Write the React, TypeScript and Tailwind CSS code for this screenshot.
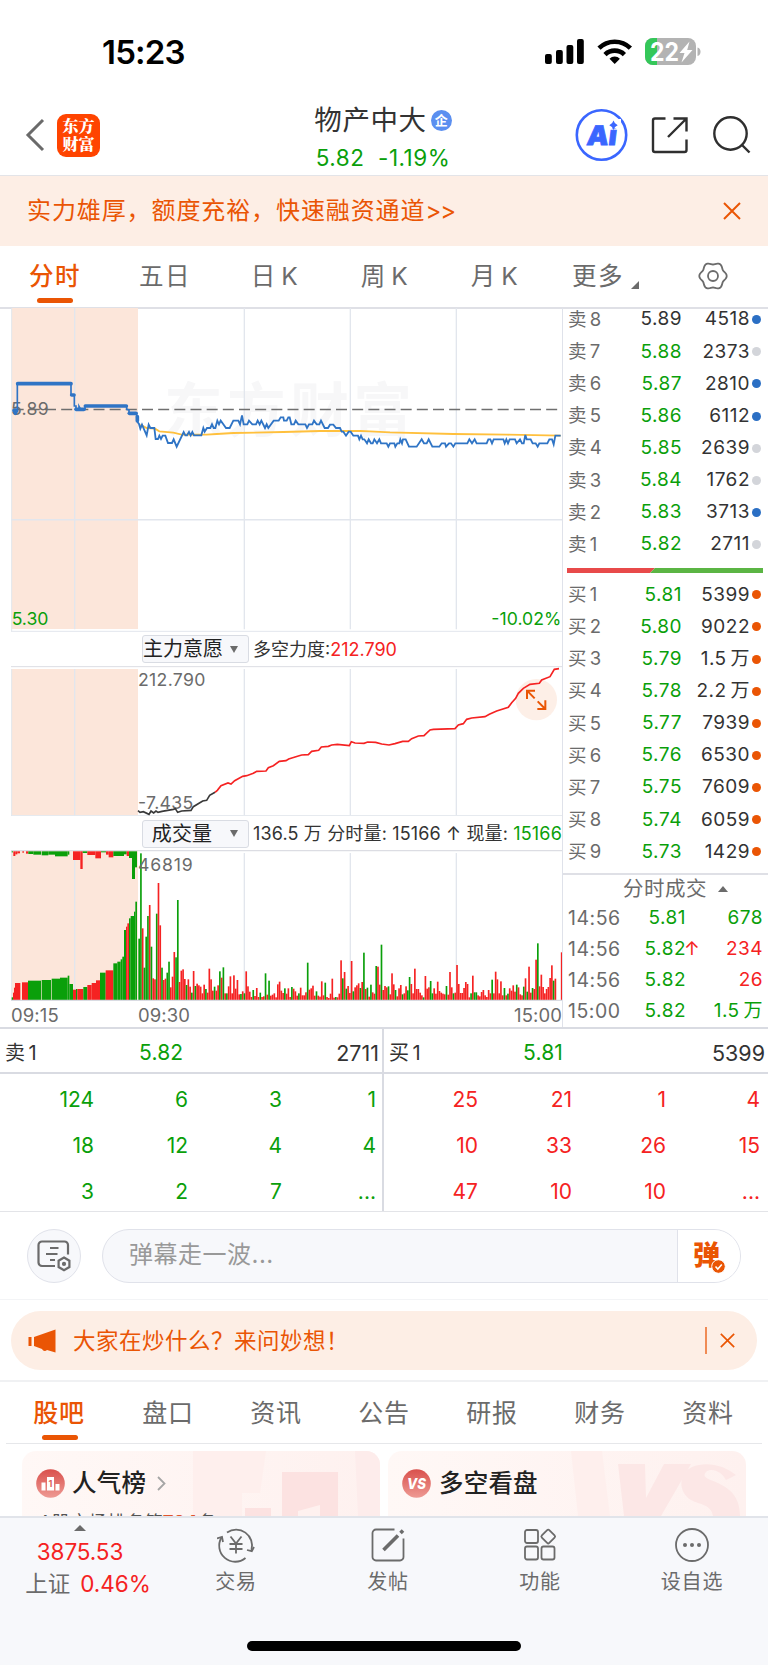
import type { ReactNode } from "react";

const GREEN = "#0a9f0a";
const RED = "#f52222";
const BLUE = "#2f74c5";
const GRID = "#e2e6ed";

type Level = { label: string; price: string; volume: string; dot: string; priceClass?: string };

const SELLS: Level[] = [
  { label: "卖 8", price: "5.89", volume: "4518", dot: "bg-[#2b6fc4]", priceClass: "text-[#333]" },
  { label: "卖 7", price: "5.88", volume: "2373", dot: "bg-[#d3d5da]" },
  { label: "卖 6", price: "5.87", volume: "2810", dot: "bg-[#2b6fc4]" },
  { label: "卖 5", price: "5.86", volume: "6112", dot: "bg-[#2b6fc4]" },
  { label: "卖 4", price: "5.85", volume: "2639", dot: "bg-[#d3d5da]" },
  { label: "卖 3", price: "5.84", volume: "1762", dot: "bg-[#d3d5da]" },
  { label: "卖 2", price: "5.83", volume: "3713", dot: "bg-[#2b6fc4]" },
  { label: "卖 1", price: "5.82", volume: "2711", dot: "bg-[#d3d5da]" },
];

const BUYS: Level[] = [
  { label: "买 1", price: "5.81", volume: "5399", dot: "bg-[#ea5504]" },
  { label: "买 2", price: "5.80", volume: "9022", dot: "bg-[#ea5504]" },
  { label: "买 3", price: "5.79", volume: "1.5 万", dot: "bg-[#ea5504]" },
  { label: "买 4", price: "5.78", volume: "2.2 万", dot: "bg-[#ea5504]" },
  { label: "买 5", price: "5.77", volume: "7939", dot: "bg-[#ea5504]" },
  { label: "买 6", price: "5.76", volume: "6530", dot: "bg-[#ea5504]" },
  { label: "买 7", price: "5.75", volume: "7609", dot: "bg-[#ea5504]" },
  { label: "买 8", price: "5.74", volume: "6059", dot: "bg-[#ea5504]" },
  { label: "买 9", price: "5.73", volume: "1429", dot: "bg-[#ea5504]" },
];

const TRADES = [
  { time: "14:56", price: "5.81", arrow: "", volume: "678", color: "text-[#0a9f0a]" },
  { time: "14:56", price: "5.82", arrow: "↑", volume: "234", color: "text-[#f52222]" },
  { time: "14:56", price: "5.82", arrow: "", volume: "26", color: "text-[#f52222]" },
  { time: "15:00", price: "5.82", arrow: "", volume: "1.5 万", color: "text-[#0a9f0a]" },
];

const SELL_ORDERS = ["124", "6", "3", "1", "18", "12", "4", "4", "3", "2", "7", "..."];
const BUY_ORDERS = ["25", "21", "1", "4", "10", "33", "26", "15", "47", "10", "10", "..."];

// Chart data is kept in thirds of a pixel
const AUCTION_LINE =
  "40,330 45,335 50,335 52,335 52,251 213,251 213,285 223,285 223,318 228,318 228,328 237,328 237,319 242,328 255,328 255,318 380,318 380,328 387,330 387,340 410,340 410,350 412,365";

const PRICE_LINE =
  "412,365 417,372 421,386 426,374 440,406 446,374 451,384 463,384 467,417 474,417 478,407 483,417 488,407 496,407 504,429 516,429 521,418 530,440 551,396 556,406 561,406 567,396 572,406 577,396 582,406 604,406 610,384 614,395 621,384 631,384 636,373 641,384 646,384 652,362 657,373 662,362 670,373 678,384 689,384 700,362 715,362 720,373 726,346 731,373 742,373 747,362 757,373 768,373 773,362 779,373 784,362 795,384 800,373 805,384 821,362 836,362 842,352 850,352 852,362 860,362 865,352 869,352 874,373 882,373 887,362 895,373 916,373 921,384 927,373 937,373 942,362 950,373 958,373 963,362 974,384 984,384 990,374 1000,374 1008,384 1020,384 1025,395 1030,395 1038,407 1046,395 1052,395 1060,407 1074,407 1078,418 1083,407 1088,418 1093,418 1101,430 1106,418 1113,430 1118,430 1123,418 1131,430 1138,418 1143,430 1160,430 1165,440 1170,430 1183,430 1186,440 1192,430 1198,430 1201,418 1206,430 1209,418 1217,418 1227,440 1250,440 1265,418 1272,430 1280,430 1286,418 1297,440 1318,440 1325,430 1335,430 1338,440 1347,430 1353,430 1360,440 1366,430 1402,430 1408,418 1416,430 1424,418 1430,430 1460,430 1465,418 1471,418 1476,430 1481,418 1510,418 1514,430 1519,418 1524,430 1529,418 1545,418 1550,430 1560,418 1566,430 1571,430 1576,405 1580,418 1592,418 1598,430 1607,430 1613,440 1618,430 1642,430 1648,418 1656,418 1661,433 1666,407 1682,407";

const AVERAGE_LINE =
  "421,374 440,384 465,386 478,394 520,398 545,404 620,404 650,402 700,399 850,396 960,393 1080,393 1110,394 1170,397 1360,402 1520,404 1682,407";

const FORCE_START =
  "414,572 420,577 430,575 447,583 453,573 461,579 468,573 474,577 486,574 520,568 526,566 533,577 545,573 573,571 580,560 608,543 620,541 629,526 645,517";

const FORCE_LINE =
  "645,517 652,511 663,497 684,489 693,492 704,482 728,469 740,467 760,460 770,454 798,453 805,443 820,437 838,424 858,422 866,417 895,408 905,405 925,404 935,394 956,391 964,381 985,379 995,375 1012,373 1048,377 1054,365 1065,369 1092,370 1103,366 1127,367 1145,372 1167,375 1185,371 1208,364 1225,364 1235,356 1255,348 1272,347 1290,330 1300,328 1365,326 1375,315 1390,311 1400,298 1415,294 1455,290 1468,283 1490,273 1525,262 1535,248 1547,235 1555,220 1570,205 1590,193 1618,190 1625,180 1650,170 1663,148 1677,146";

const VOLUMES_A =
  "g184 g440 r215 g97 g190 g252 r285 g160 r65 r62 g259 r351 r224 g97 r60 r64 g82 g115 r38 r70 r144 g128 g300 r54 r88 r92 r63 g45 r62 r40 g22 r87 g42 r49 r44 r40 r20 r46 g33 r22";

const VOLUMES_B =
  "r94 r62 r28 g40 r28 r44 g86 r67 g98 r20 g20 r41 r71 r20 r74 r34 r60 r17 g18 r26 g20 r86 r41 r25 r9 g30 r12 r36 r9 g22 r9 r11 g80 r16 g58 r13 r16 r20 r8 r47 r55 r28 r21 g35 r19 r35 r9 g39 r34 r26 r13 g20 r37 r14 r14 r23 g112 r31 r35 r43 r13 g26 r13 r10 r56 r14 g52 r9 r6 r19 r64 r7 g9 r8 r19 r119 g65 r84 g34 r42 r21 r117 g26 r38 r44 r50 g36 r54 g142 r33 g37 r10 g46 r23 r19 g102 r100 r46 g166 r30 r42 r38 g41 r17 r80 r47 g30 r11 r35 r45 g17 r20 r41 g29 g69 r48 r20 r94 r33 r33 r22 r14 g8 r72 r34 r38 g57 g20 r35 r19 r55 r27 r22 r19 r17 g42 r16 r84 r38 g20 r22 r105 r48 r21 r21 r36 r54 r48 r8 g20 r73 g23 g23 r14 r11 r24 r30 r14 r9 r30 r20 g61 r20 r85 r62 r20 r56 r14 g36 r14 g19 r35 r28 r44 r25 g46 r38 r17 r14 g40 r65 g25 r100 r22 g36 r33 r121 g170 r41 r76 r39 r20 r33 r39 r66 r104 g58 r64";

// [from, to, height, color]
const AUCTION_BARS: [number, number, number, string][] = [
  [35, 39, 8, "g"], [39, 42, 22, "r"], [42, 45, 37, "r"], [45, 61, 51, "r"], [66, 84, 53, "r"],
  [84, 123, 58, "g"], [125, 153, 60, "g"], [155, 180, 64, "g"], [180, 203, 67, "g"], [203, 208, 73, "g"],
  [208, 219, 48, "g"], [219, 228, 31, "r"], [228, 232, 33, "g"], [232, 250, 33, "r"], [250, 262, 39, "g"],
  [262, 275, 45, "r"], [275, 288, 51, "r"], [288, 300, 59, "r"], [300, 317, 82, "g"], [317, 340, 89, "r"],
  [340, 352, 110, "g"], [352, 362, 115, "g"], [362, 367, 122, "g"], [367, 372, 130, "g"], [372, 378, 210, "g"],
  [378, 382, 220, "r"], [382, 387, 230, "r"], [387, 392, 245, "g"], [392, 402, 252, "g"], [402, 406, 265, "g"], [406, 411, 295, "g"],
];

const AUCTION_TOP: [number, number, number, string][] = [
  [35, 39, 3, "g"], [40, 46, 14, "r"], [46, 52, 9, "r"], [52, 60, 6, "r"], [67, 72, 4, "r"], [78, 85, 7, "r"],
  [85, 100, 8, "g"], [100, 123, 10, "g"], [125, 145, 12, "g"], [145, 165, 10, "g"], [165, 203, 15, "g"], [203, 208, 10, "g"],
  [219, 241, 26, "r"], [241, 248, 53, "r"], [248, 262, 5, "g"], [262, 286, 11, "r"], [286, 303, 21, "r"], [303, 318, 3, "g"],
  [318, 326, 10, "r"], [326, 340, 18, "r"], [340, 372, 14, "g"], [372, 380, 9, "g"], [380, 387, 14, "r"], [387, 396, 20, "g"],
  [396, 405, 83, "g"], [405, 411, 48, "g"],
];

const COLORS: Record<string, string> = { g: GREEN, r: RED };

function VolumeBars({ data, start }: { data: string; start: number }) {
  return (
    <>
      {data.split(" ").map((bar, i) => {
        const h = Number(bar.slice(1));
        return <rect key={i} x={start + i * 5.27 - 2.5} y={1140 - h} width={5} height={h} fill={COLORS[bar[0]]} />;
      })}
    </>
  );
}

function GridLines({ y1, y2 }: { y1: number; y2: number }) {
  return (
    <g stroke={GRID} strokeWidth={4}>
      <line x1={224} x2={224} y1={y1} y2={y2} />
      <line x1={733} x2={733} y1={y1} y2={y2} />
      <line x1={1051} x2={1051} y1={y1} y2={y2} />
      <line x1={1369} x2={1369} y1={y1} y2={y2} />
    </g>
  );
}

function PriceChart() {
  return (
    <svg viewBox="0 24 1686 972" className="block h-[324px] w-[562px]">
      <rect x={35} y={24} width={379} height={963} fill="#fce6da" />
      <text x={492} y={397} fontSize={176} fontWeight={700} fill="#f7f7f8" textLength={744}>东方财富</text>
      <GridLines y1={24} y2={988} />
      <line x1={35} x2={35} y1={24} y2={994} stroke={GRID} strokeWidth={3} />
      <line x1={35} x2={1686} y1={659} y2={659} stroke={GRID} strokeWidth={4.5} />
      <line x1={33} x2={1686} y1={994} y2={994} stroke={GRID} strokeWidth={3} />
      <text x={33} y={346} fontSize={53} fill="#6b6b6b" textLength={113}>5.89</text>
      <line x1={38} x2={1686} y1={328.5} y2={328.5} stroke="#6f6f6f" strokeWidth={4} strokeDasharray="33 15.5" />
      <polyline points={AVERAGE_LINE} fill="none" stroke="#ffc03d" strokeWidth={5.5} />
      <polyline points={AUCTION_LINE} fill="none" stroke={BLUE} strokeWidth={5} />
      <g stroke={BLUE} strokeWidth={11} strokeLinecap="round">
        <line x1={42} x2={50} y1={332} y2={332} />
        <line x1={46} x2={46} y1={330} y2={340} />
        <line x1={53} x2={213} y1={251} y2={251} />
        <line x1={215} x2={222} y1={285} y2={285} />
        <line x1={228} x2={252} y1={328} y2={328} />
        <line x1={256} x2={379} y1={318} y2={318} />
        <line x1={388} x2={408} y1={340} y2={340} />
        <line x1={412} x2={412} y1={350} y2={362} />
      </g>
      <polyline points={PRICE_LINE} fill="none" stroke={BLUE} strokeWidth={5.5} />
      <text x={35} y={974} fontSize={53} fill={GREEN} textLength={110}>5.30</text>
      <text x={1474} y={974} fontSize={53} fill={GREEN} textLength={210}>-10.02%</text>
    </svg>
  );
}

function ForceChart() {
  return (
    <svg viewBox="0 138 1686 450" className="block h-[150px] w-[562px]">
      <line x1={33} x2={1686} y1={140} y2={140} stroke="#dcdde3" strokeWidth={3} />
      <rect x={35} y={147} width={379} height={438} fill="#fce6da" />
      <GridLines y1={147} y2={586} />
      <line x1={35} x2={35} y1={147} y2={588} stroke={GRID} strokeWidth={3} />
      <line x1={33} x2={1686} y1={587} y2={587} stroke={GRID} strokeWidth={3} />
      <circle cx={1609} cy={239} r={62} fill="#fdefe7" />
      <text x={414} y={197} fontSize={53} fill="#6b6b6b" textLength={202}>212.790</text>
      <text x={414} y={567} fontSize={53} fill="#6b6b6b" textLength={166}>-7.435</text>
      <polyline points={FORCE_START} fill="none" stroke="#3a3a3a" strokeWidth={5} />
      <polyline points={FORCE_LINE} fill="none" stroke={RED} strokeWidth={5} />
      <g fill="none" stroke="#ea5504" strokeWidth={6}>
        <path d="M1581 237V212H1605M1581 212L1604 235" />
        <path d="M1636 241V267H1612M1636 267L1613 244" />
      </g>
    </svg>
  );
}

function VolumeChart() {
  return (
    <svg viewBox="0 690 1686 453" className="block h-[151px] w-[562px]">
      <rect x={35} y={693} width={379} height={447} fill="#fce6da" />
      <line x1={33} x2={1686} y1={692} y2={692} stroke="#dcdde3" strokeWidth={4} />
      <GridLines y1={699} y2={1140} />
      <line x1={35} x2={35} y1={692} y2={1140} stroke={GRID} strokeWidth={3} />
      {AUCTION_BARS.map(([from, to, h, c]) => (
        <rect key={from} x={from} y={1140 - h} width={to - from} height={h} fill={COLORS[c]} />
      ))}
      {AUCTION_TOP.map(([from, to, h, c]) => (
        <rect key={from} x={from} y={694} width={to - from} height={h} fill={COLORS[c]} />
      ))}
      <VolumeBars data={VOLUMES_A} start={417.5} />
      <VolumeBars data={VOLUMES_B} start={628} />
      <rect x={1682.5} y={997} width={4} height={143} fill={RED} />
      <text x={414} y={752} fontSize={53} fill="#6b6b6b" textLength={164}>46819</text>
      <line x1={33} x2={1686} y1={1141} y2={1141} stroke="#d9dbe2" strokeWidth={4} />
    </svg>
  );
}

function StatusBar() {
  return (
    <div className="flex h-[95px] items-start justify-between pt-[33px] pr-[67px] pl-[102px]">
      <span className="text-[33px] leading-[38px] font-semibold tracking-[-0.800px] text-black">15:23</span>
      <svg width="157" height="38" viewBox="544 33 157 38">
        <g>
          <rect x="545" y="54" width="6.8" height="10" rx="2" />
          <rect x="556" y="50" width="6.8" height="14" rx="2" />
          <rect x="566.500" y="45" width="6.8" height="19" rx="2" />
          <rect x="577" y="39" width="6.800" height="25" rx="2" />
        </g>
        <g fill="none" stroke="#000" strokeWidth="4.600">
          <path d="M599 48.200a22.500 22.500 0 0 1 31.400 0" />
          <path d="M605 54.600a13.800 13.800 0 0 1 19.400 0" />
        </g>
        <path d="M614.700 64l-5.200-5.300a7.400 7.400 0 0 1 10.400 0z" />
        <clipPath id="battery">
          <rect x="645" y="38" width="51" height="27" rx="8" />
        </clipPath>
        <g clipPath="url(#battery)">
          <rect x="645" y="38" width="51" height="27" fill="#b3b3b3" />
          <rect x="645" y="38" width="12" height="27" fill="#34c759" />
        </g>
        <path d="M697.500 47.500c2 .500 3 2 3 4.200s-1 3.700-3 4.200z" fill="#b3b3b3" />
        <text x="650" y="60.500" fontSize="25" fontWeight="700" fill="#fff" textLength="29" lengthAdjust="spacingAndGlyphs">22</text>
        <path d="M689.500 41.500l-10 11.500h5l-3 9.500 11-12.500h-5.300z" fill="#fff" />
      </svg>
    </div>
  );
}

function Header() {
  return (
    <div className="grid h-[81px] grid-cols-[1fr_auto_1fr] border-b border-[#e3e4e8]">
      <div className="flex items-center pt-px pl-[25px]">
        <svg width="20" height="34" viewBox="0 0 20 34" fill="none" stroke="#6a6a6a" strokeWidth="3">
          <path d="M18 2L3 17l15 15" />
        </svg>
        <div className="ml-3 flex h-[43px] w-[43px] flex-col items-center justify-center rounded-[9px] bg-[#ff4400] font-['Noto_Serif_CJK_SC','Noto_Sans_CJK_SC',serif] text-[16px] leading-[18px] font-black text-white">
          <span>东方</span>
          <span>财富</span>
        </div>
      </div>
      <div className="flex flex-col items-center pr-0.5">
        <div className="flex h-[52px] items-center">
          <span className="text-[27.500px] tracking-[0.600px] text-[#333]">物产中大</span>
          <span className="ml-1 flex h-[21px] w-[21px] items-center justify-center rounded-full bg-[#5b8ff0] text-[13px] font-bold text-white">企</span>
        </div>
        <div className="text-[22.500px] leading-[22px] tracking-[0.500px] whitespace-pre text-[#0a9f0a]">5.82  -1.19%</div>
      </div>
      <div className="flex items-center justify-end pt-px pr-[17px]">
        <svg width="176" height="54" viewBox="575 108 176 54" fill="none">
          <circle cx="601.500" cy="135" r="24.700" stroke="#3a66ff" strokeWidth="2.600" />
          <g transform="translate(586 144.500) skewX(-7)">
            <text x="0" y="0" fontSize="27" fontWeight="900" fill="#3a66ff" stroke="#3a66ff" strokeWidth="0.800" textLength="30" lengthAdjust="spacingAndGlyphs">Ai</text>
          </g>
          <rect x="607" y="119" width="14" height="9.500" fill="#fff" />
          <path d="M613.500 120.500q1 3.500 4.200 4.700q-3.200 1.300-4.200 4.700q-1-3.400-4.200-4.700q3.200-1.200 4.200-4.700z" fill="#3a66ff" />
          <g stroke="#2f2f2f" strokeWidth="2.400">
            <path d="M665.500 118.500H655a2 2 0 0 0-2 2V150a2 2 0 0 0 2 2h29.500a2 2 0 0 0 2-2v-10.500" />
            <path d="M673.500 118.500h13v13M686.500 118.500l-18.500 18.500" />
            <circle cx="730.500" cy="133.500" r="16.200" />
            <path d="M741.500 144.500l8 8" />
          </g>
        </svg>
      </div>
    </div>
  );
}

function CloseIcon({ className }: { className: string }) {
  return (
    <svg viewBox="0 0 18 18" className={className} fill="none" stroke="#ea5504" strokeWidth="2">
      <path d="M1 1l16 16M17 1L1 17" />
    </svg>
  );
}

function gearPath() {
  const points = Array.from({ length: 72 }, (_, i) => {
    const a = (i / 72) * Math.PI * 2;
    const r = 12.6 + 1.1 * Math.cos(a * 6);
    return `${(15 + r * Math.cos(a)).toFixed(2)},${(15 + r * Math.sin(a)).toFixed(2)}`;
  });
  return `M${points.join("L")}Z`;
}

function PeriodTabs() {
  return (
    <div className="flex h-[63px] border-b-2 border-[#dfe0e6] text-[24.500px] leading-[61px] tracking-[1.500px] text-[#6b6b6b]">
      <div className="flex w-[110px] flex-col items-center text-[#ea5504]">
        <span className="h-[52px] font-medium">分时</span>
        <span className="h-[5px] w-9 shrink-0 rounded-full bg-[#ea5504]" />
      </div>
      {["五日", "日 K", "周 K", "月 K"].map((tab) => (
        <div key={tab} className="w-[110px] text-center [word-spacing:-4px]">{tab}</div>
      ))}
      <div className="flex w-[123px] pl-[22px]">
        更多
        <svg width="8" height="8" className="mt-[35px] ml-[7px]" fill="#6b6b6b">
          <path d="M8 0v8H0z" />
        </svg>
      </div>
      <svg width="30" height="30" viewBox="0 0 30 30" className="mt-[15px] ml-[25px]" fill="none" stroke="#6b6b6b" strokeWidth="1.800">
        <path d={gearPath()} />
        <circle cx="15" cy="15" r="5" />
      </svg>
    </div>
  );
}

function SelectButton({ children }: { children: ReactNode }) {
  return (
    <div className="flex h-7 w-[107px] shrink-0 items-center rounded-[3px] border border-[#d9dce3] bg-[#f7f8fb] text-[20px] text-[#222]">
      <span className="w-[78px] text-center whitespace-nowrap">{children}</span>
      <svg width="8" height="7" className="ml-[9px]" fill="#6b6b6b">
        <path d="M0 0h8L4 7z" />
      </svg>
    </div>
  );
}

function Charts() {
  return (
    <div className="flex w-[563px] flex-col border-r border-[#dfe2ea]">
      <PriceChart />
      <div className="flex h-[34px] items-center pt-px pl-[142px] text-[18px] text-[#333]">
        <SelectButton>主力意愿</SelectButton>
        <span className="ml-1 whitespace-nowrap">
          多空力度:<span className="text-[#f52222]">212.790</span>
        </span>
      </div>
      <ForceChart />
      <div className="flex h-[34px] items-center pt-0.5 pl-[142px] text-[18px] tracking-[0.150px] text-[#333]">
        <SelectButton>成交量</SelectButton>
        <span className="ml-1 whitespace-nowrap">
          136.5 万 分时量: 15166 ↑ 现量: <span className="text-[#0a9f0a]">15166</span>
        </span>
      </div>
      <VolumeChart />
      <div className="flex h-[26px] items-center pt-1 pl-[11px] text-[18.500px] tracking-[0.100px] text-[#6b6b6b]">
        <span className="w-[127px]">09:15</span>
        <span className="flex-1">09:30</span>
        <span>15:00</span>
      </div>
    </div>
  );
}

function LevelRow({ level }: { level: Level }) {
  return (
    <div className="flex h-[32.150px] items-center">
      <span className="w-[58px] text-[18.500px] text-[#6b6b6b] [word-spacing:-2px]">{level.label}</span>
      <span className={`w-[56px] text-right tracking-[0.500px] ${level.priceClass ?? "text-[#0a9f0a]"}`}>{level.price}</span>
      <span className="w-[68px] text-right tracking-[0.500px] text-[#333] [word-spacing:-2px]">{level.volume}</span>
      <span className={`ml-0.5 h-[9px] w-[9px] rounded-full ${level.dot}`} />
    </div>
  );
}

function OrderBook() {
  return (
    <div className="flex flex-1 flex-col text-[19px]">
      <div className="h-[569px] overflow-hidden border-b-2 border-[#dfe0e6] pl-[5px]">
        <div className="-mt-[4px]">
          {SELLS.map((level) => (
            <LevelRow key={level.label} level={level} />
          ))}
        </div>
        <svg width="196" height="5" className="mt-[7px] -ml-px">
          <path d="M0 0h88l-5 5H0z" fill="#e84a4a" />
          <path d="M88 0h108v5H83z" fill="#5bb544" />
        </svg>
        <div className="mt-[6px]">
          {BUYS.map((level) => (
            <LevelRow key={level.label} level={level} />
          ))}
        </div>
      </div>
      <div className="flex h-[28px] items-center justify-center gap-[11px] pt-px pl-[20px] text-[20.500px] tracking-[0.500px] text-[#6b6b6b]">
        分时成交
        <svg width="10" height="6" fill="#6b6b6b">
          <path d="M0 6h10L5 0z" />
        </svg>
      </div>
      {TRADES.map((trade, i) => (
        <div key={i} className="flex h-[31px] shrink-0 items-center pr-[5px] pl-[5px] tracking-[0.500px]">
          <span className="w-[60px] text-[19.500px] text-[#6b6b6b]">{trade.time}</span>
          <span className="w-[58px] text-right text-[#0a9f0a]">{trade.price}</span>
          <span className="-ml-0.5 w-[18px] text-[19px] text-[#f52222]">{trade.arrow}</span>
          <span className={`flex-1 text-right [word-spacing:-2px] ${trade.color}`}>{trade.volume}</span>
        </div>
      ))}
    </div>
  );
}

type QueueProps = { label: string; price: string; volume: string; orders: string[]; color: string; className: string; gridClass: string };

function OrderQueue({ label, price, volume, orders, color, className, gridClass }: QueueProps) {
  return (
    <div className={`text-[21px] ${className}`}>
      <div className="grid h-[45px] grid-cols-[134px_1fr_auto] items-center border-b-2 border-[#d9dbe2] pt-[6px] pr-[3px] pl-[5px] text-[#333]">
        <span className="text-[20px] [word-spacing:-2px]">{label}</span>
        <span className="tracking-[0.200px] text-[#0a9f0a]">{price}</span>
        <span className="text-[21.500px]">{volume}</span>
      </div>
      <div className={`grid grid-cols-4 pt-[3px] ${gridClass} ${color}`}>
        {orders.map((n, i) => (
          <span key={i} className="h-[46px] text-right leading-[46px]">{n}</span>
        ))}
      </div>
    </div>
  );
}

function DanmakuBar() {
  return (
    <div className="flex h-[90px] items-center border-t border-b border-t-[#e3e4e8] border-b-[#f3f4f6] pt-px pl-[27px]">
      <div className="flex h-[54px] w-[54px] items-center justify-center rounded-full border border-[#e0e2ea] bg-[#f7f8fb]">
        <svg width="34" height="32" viewBox="0 0 34 32" fill="none" stroke="#6b6b6b" strokeWidth="2.200">
          <path d="M18 26H5a3.500 3.500 0 0 1-3.500-3.500V5A3.500 3.500 0 0 1 5 1.500h22.500A3.500 3.500 0 0 1 31 5v9.500" />
          <path d="M13 8h8.500M9 14h11.500M13 20h5" />
          <path d="M27 17.500l5.400 3.200v6.300L27 30.200l-5.400-3.200v-6.300z" />
          <circle cx="27" cy="23.900" r="1" />
        </svg>
      </div>
      <div className="ml-[21px] flex h-[54px] w-[639px] overflow-hidden rounded-full border border-[#e0e2ea] bg-[#f7f8fb]">
        <span className="flex-1 pl-[26px] text-[24px] leading-[49px] tracking-[0.500px] text-[#999]">弹幕走一波...</span>
        <div className="relative flex w-[63px] items-center border-l border-[#e0e2ea] bg-white pl-[15px] text-[27px] font-black text-[#ea5504]">
          弹
          <svg width="15" height="15" viewBox="0 0 15 15" className="absolute top-[29px] left-[33px]">
            <circle cx="7.500" cy="7.500" r="6.800" fill="#ea5504" stroke="#fff" strokeWidth="1" />
            <path d="M4.500 7.500l2.300 2.500 4-4.500" fill="none" stroke="#fff" strokeWidth="1.600" />
          </svg>
        </div>
      </div>
    </div>
  );
}

function AskBanner() {
  return (
    <div className="h-[82px] border-b-2 border-[#f0f1f3] px-[11px] pt-[11px]">
      <div className="flex h-[59px] items-center rounded-full bg-[#fdeee5] pr-[22px] pl-[17px]">
        <svg width="28" height="24" viewBox="0 0 28 24" fill="#ea5504">
          <path d="M.5 8h3v9h-3zM6 8L27.500.500v23L19 21c-1.500 1.500-4 1.200-5-1L6 17z" />
        </svg>
        <span className="ml-[17px] flex-1 text-[22.500px] tracking-[0.500px] text-[#ea5504]">大家在炒什么？来问妙想！</span>
        <span className="mr-[13px] h-[27px] w-0.5 bg-[#f08b55]" />
        <CloseIcon className="h-[15px] w-[15px]" />
      </div>
    </div>
  );
}

function InfoTabs() {
  return (
    <div className="px-[6px]">
      <div className="grid h-[62px] grid-cols-7 border-b border-[#e6e7ea] text-center text-[25px] leading-[63px] tracking-[0.800px] text-[#6b6b6b]">
        <div className="flex flex-col items-center text-[#ea5504]">
          <span className="mr-0.5 h-[53px] font-medium">股吧</span>
          <span className="h-[5px] w-9 shrink-0 rounded-full bg-[#ea5504]" />
        </div>
        {["盘口", "资讯", "公告", "研报", "财务", "资料"].map((tab) => (
          <span key={tab}>{tab}</span>
        ))}
      </div>
    </div>
  );
}

function Cards() {
  return (
    <div className="flex h-[72px] gap-2 overflow-hidden px-[22px] pt-[7px]">
      <div className="relative h-[120px] w-[358px] overflow-hidden rounded-[14px] bg-linear-to-r from-[#fff8f6] to-[#fef1ef]">
        <svg width="358" height="65" className="absolute inset-0">
          <path d="M171 0h73l-6 42h-18v23h-49z" fill="#feefed" />
          <path d="M333 0h25v65h-22z" fill="#fdeceb" />
          <path d="M260 21h56v44h-56zM223 57h26v8h-26z" fill="#fce2e1" />
          <path d="M276 60l22-6v11h-22z" fill="#fef1ef" />
        </svg>
        <div className="relative flex h-[64px] items-center pl-[14px]">
          <svg width="29" height="29" viewBox="0 0 29 29">
            <defs>
              <linearGradient id="badge" x1="0" y1="0" x2="0" y2="1">
                <stop offset="0" stopColor="#d9504c" />
                <stop offset="1" stopColor="#ee9a94" />
              </linearGradient>
            </defs>
            <circle cx="14.500" cy="14.500" r="14.300" fill="url(#badge)" />
            <path d="M5.500 13.500h4v8h-4zM11 8h7v13.500h-7zM19.500 15h4v6.500h-4z" fill="#fff" />
            <text x="12.500" y="18" fontSize="9" fontWeight="700" fill="#dc625c">1</text>
          </svg>
          <span className="ml-[7px] text-[24.500px] font-medium tracking-[0.200px] text-[#222]">人气榜</span>
          <svg width="9" height="15" className="ml-[11px]" fill="none" stroke="#a5a5a5" strokeWidth="1.800">
            <path d="M1 1l6.500 6.500L1 14" />
          </svg>
        </div>
        <div className="relative -mt-[5px] pl-[17px] text-[18.500px] leading-6 text-[#555]">
          A股市场排名第<span className="font-bold text-[#e0552f]">724</span>名
        </div>
      </div>
      <div className="relative h-[120px] w-[358px] overflow-hidden rounded-[14px] bg-linear-to-r from-[#fff8f6] to-[#fef1ef]">
        <svg width="358" height="65" className="absolute inset-0">
          <path d="M183 0h31l8 65h-32z" fill="#feefed" />
          <path d="M230 13h27l1 34 18-34h27l-30 52h-37z" fill="#fce7e6" />
          <path d="M348 24c-12-10-30-14-44-8-14 7-14 25-1 33 9 5 20 4 22 16h27c0-18-9-27-22-33-12-5-16-6-12-11 6-5 16 0 20 8z" fill="#fce7e6" />
        </svg>
        <div className="relative flex h-[64px] items-center pl-[14px]">
          <svg width="29" height="29" viewBox="0 0 29 29">
            <circle cx="14.500" cy="14.500" r="14.300" fill="url(#badge)" />
            <text x="5" y="20" fontSize="15" fontWeight="800" fontStyle="italic" fill="#fff" textLength="19" lengthAdjust="spacingAndGlyphs">VS</text>
          </svg>
          <span className="ml-[8px] text-[24.500px] font-medium tracking-[0.200px] text-[#222]">多空看盘</span>
        </div>
      </div>
    </div>
  );
}

function NavItem({ label, children }: { label: string; children: ReactNode }) {
  return (
    <div className="flex w-[152px] flex-col items-center pt-[9px]">
      <svg width="38" height="36" viewBox="0 0 38 36" fill="none" stroke="#6b6b6b" strokeWidth="1.800">
        {children}
      </svg>
      <span className="mt-1 text-[20px] leading-[30px] tracking-[0.800px] text-[#6b6b6b]">{label}</span>
    </div>
  );
}

function BottomNav() {
  return (
    <div className="h-[149px] border-t-2 border-[#e1e4ea] bg-[#f7f8fb]">
      <div className="flex h-[123px]">
        <div className="flex w-[160px] flex-col items-center pt-[7px]">
          <svg width="12" height="6" fill="#6b6b6b">
            <path d="M0 6h12L6 0z" />
          </svg>
          <span className="mt-[5px] text-[22.500px] leading-[32px] tracking-[-0.100px] text-[#f52222]">3875.53</span>
          <span className="pl-4 text-[22.500px] leading-[31px] text-[#f52222]">
            <span className="text-[#6b6b6b]">上证</span>
            <span className="ml-[10px]">0.46%</span>
          </span>
        </div>
        <NavItem label="交易">
          <path d="M10 5.500a16 16 0 0 1 24.500 17.500M28.500 31A16 16 0 0 1 4.500 10.500" />
          <path d="M0 11.500l5-1.500 1 5M30 23l4.800 1.200L37 20" />
          <path d="M13.500 9.500l5.500 7 5.500-7M12.500 17h13M12.500 22h13M19 17v9.500" />
        </NavItem>
        <NavItem label="发帖">
          <path d="M25.500 2.500H7A3.500 3.500 0 0 0 3.500 6v24A3.500 3.500 0 0 0 7 33.500h24a3.500 3.500 0 0 0 3.500-3.500V11.500" />
          <path d="M14.500 23L29 8.500M31.500 6l2.500-2.500" strokeWidth="3.600" />
        </NavItem>
        <NavItem label="功能">
          <rect x="4" y="3" width="13" height="13" rx="2" />
          <rect x="4" y="19.500" width="13" height="13" rx="2" />
          <rect x="20.500" y="19.500" width="13" height="13" rx="2" />
          <rect x="22" y="4.300" width="10.500" height="10.500" rx="1.500" transform="rotate(45 27.250 9.500)" />
        </NavItem>
        <NavItem label="设自选">
          <circle cx="19" cy="18" r="16" />
          <g fill="#6b6b6b" stroke="none">
            <circle cx="12" cy="18" r="2" />
            <circle cx="19" cy="18" r="2" />
            <circle cx="26" cy="18" r="2" />
          </g>
        </NavItem>
      </div>
      <div className="mx-auto h-[10px] w-[274px] rounded-full bg-black" />
    </div>
  );
}

export default function App() {
  return (
    <div className="flex h-[1665px] w-[768px] flex-col overflow-hidden bg-white font-['Inter','Noto_Sans_CJK_SC',sans-serif]">
      <StatusBar />
      <Header />
      <div className="flex h-[70px] items-center justify-between bg-[#fdeee5] pr-[27px] pl-[27px] text-[24px] tracking-[0.900px] text-[#ea5504]">
        <span>
          实力雄厚，额度充裕，快速融资通道<span className="tracking-[-1px]">&gt;&gt;</span>
        </span>
        <CloseIcon className="h-[18px] w-[18px]" />
      </div>
      <PeriodTabs />
      <div className="-mt-px flex h-[719px]">
        <Charts />
        <OrderBook />
      </div>
      <div className="flex h-[184px] border-t-2 border-[#d9dbe2]">
        <OrderQueue
          label="卖 1"
          price="5.82"
          volume="2711"
          orders={SELL_ORDERS}
          color="text-[#0a9f0a]"
          className="w-[384px] border-r-2 border-[#d9dbe2]"
          gridClass="pr-[6px]"
        />
        <OrderQueue
          label="买 1"
          price="5.81"
          volume="5399"
          orders={BUY_ORDERS}
          color="text-[#f52222]"
          className="w-[384px]"
          gridClass="pr-[8px]"
        />
      </div>
      <DanmakuBar />
      <AskBanner />
      <InfoTabs />
      <Cards />
      <BottomNav />
    </div>
  );
}
